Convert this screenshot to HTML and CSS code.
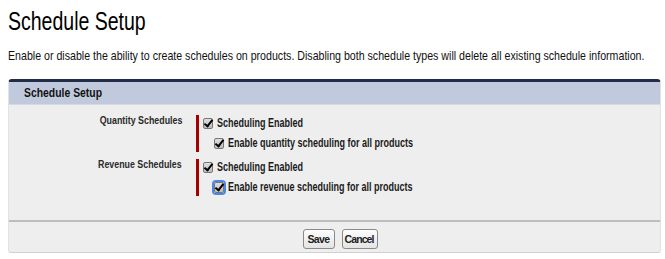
FILE: index.html
```html
<!DOCTYPE html>
<html lang="en">
  <head>
    <meta charset="UTF-8" />
    <title>Schedule Setup</title>
    <link rel="stylesheet" href="styles.css">
  </head>
  <body>
    <h1 class="page-title">Schedule Setup</h1>
    <p class="intro">Enable or disable the ability to create schedules on products. Disabling both schedule types will delete all existing schedule information.</p>
    <!-- Settings panel -->
    <form class="panel">
      <div class="panel-header"><span class="squeeze">Schedule Setup</span></div>
      <div class="panel-body">
        <div class="field-row">
          <div class="field-label"><span class="squeeze">Quantity Schedules</span></div>
          <div class="field-value">
            <label class="check"><input type="checkbox" checked /><span class="squeeze">Scheduling Enabled</span></label>
            <label class="check sub"><input type="checkbox" checked /><span class="squeeze">Enable quantity scheduling for all products</span></label>
          </div>
        </div>
        <div class="field-row">
          <div class="field-label"><span class="squeeze">Revenue Schedules</span></div>
          <div class="field-value">
            <label class="check"><input type="checkbox" checked /><span class="squeeze">Scheduling Enabled</span></label>
            <label class="check sub focus"><input type="checkbox" checked /><span class="squeeze">Enable revenue scheduling for all products</span></label>
          </div>
        </div>
      </div>
      <div class="panel-footer">
        <button type="button" class="btn">Save</button>
        <button type="button" class="btn btn-cancel">Cancel</button>
      </div>
    </form>
  </body>
</html>
```

FILE: styles.css
```css
body {
  font-family: "Liberation Sans", Arial, sans-serif;
  margin: 0;
  padding: 0 4px 0 8px;
  background-color: #fff;
  color: #000;
}
/* text in the screenshot is set narrow */
.squeeze {
  display: inline-block;
  white-space: nowrap;
  transform-origin: left center;
}
.page-title {
  font-size: 25px;
  font-weight: normal;
  line-height: 28px;
  margin: 7px 0 0;
  white-space: nowrap;
  transform: scaleX(0.78);
  transform-origin: left center;
}
.intro {
  font-size: 13px;
  line-height: 15px;
  margin: 13px 0 0;
  color: #111;
  white-space: nowrap;
  transform: scaleX(0.817);
  transform-origin: left center;
}
/* Panel */
.panel {
  margin-top: 16px;
  border-top: 3px solid #222c48;
  border-left: 1px solid #e2e2e2;
  border-right: 1px solid #e2e2e2;
  border-bottom: 1px solid #d0d0d0;
  border-radius: 4px 4px 3px 3px;
  background-color: #eee;
}
.panel-header {
  background-color: #c1c9dc;
  font-size: 13px;
  font-weight: bold;
  height: 22px;
  line-height: 22px;
  padding-left: 15px;
  border-bottom: 1px solid #d6dae4;
  color: #111;
}
.panel-header .squeeze {
  transform: scaleX(0.8);
}
.panel-body {
  padding: 10px 0 24px;
}
.field-row {
  display: flex;
  margin-bottom: 7px;
}
.field-row:last-child {
  margin-bottom: 0;
}
.field-label {
  width: 173px;
  text-align: right;
  font-size: 11.5px;
  line-height: 11px;
  font-weight: bold;
  color: #2a2a2a;
}
.field-label .squeeze {
  transform: scaleX(0.77);
  transform-origin: right center;
}
.field-value {
  margin-left: 14px;
  border-left: 3px solid #a30000;
  padding: 0 0 1px 4px;
  display: flex;
  flex-direction: column;
  gap: 4px;
}
.check {
  display: flex;
  align-items: center;
  gap: 4px;
  font-size: 12px;
  font-weight: bold;
  color: #1a1a1a;
  height: 16px;
}
.check .squeeze {
  transform: scaleX(0.75);
}
.check input {
  appearance: none;
  position: relative;
  margin: 0;
  width: 10px;
  height: 11px;
  border: 1px solid #777;
  border-radius: 2px;
  background: linear-gradient(#dedede, #bdbdbd);
}
.check input:checked::after {
  content: "";
  position: absolute;
  left: 2px;
  top: -1px;
  width: 3px;
  height: 7px;
  border: solid #000;
  border-width: 0 2px 2px 0;
  transform: rotate(38deg);
}
.check.sub {
  margin-left: 11px;
}
.check.focus input {
  outline: 2px solid #4f86e6;
  outline-offset: 0;
  border-radius: 2px;
}
.panel-footer {
  border-top: 2px solid #bdbdbd;
  display: flex;
  justify-content: center;
  gap: 7px;
  padding: 7px 0 3px 12px;
}
.btn {
  font-family: inherit;
  font-size: 10.5px;
  font-weight: bold;
  letter-spacing: -0.6px;
  color: #222;
  background: linear-gradient(#fdfdfd, #e4e4e4);
  border: 1px solid #8a8a8a;
  border-radius: 3px;
  height: 20px;
  padding: 0 4px 0 3px;
  cursor: pointer;
}
.btn-cancel {
  letter-spacing: -0.9px;
  padding: 0 3px 0 2px;
}
```
